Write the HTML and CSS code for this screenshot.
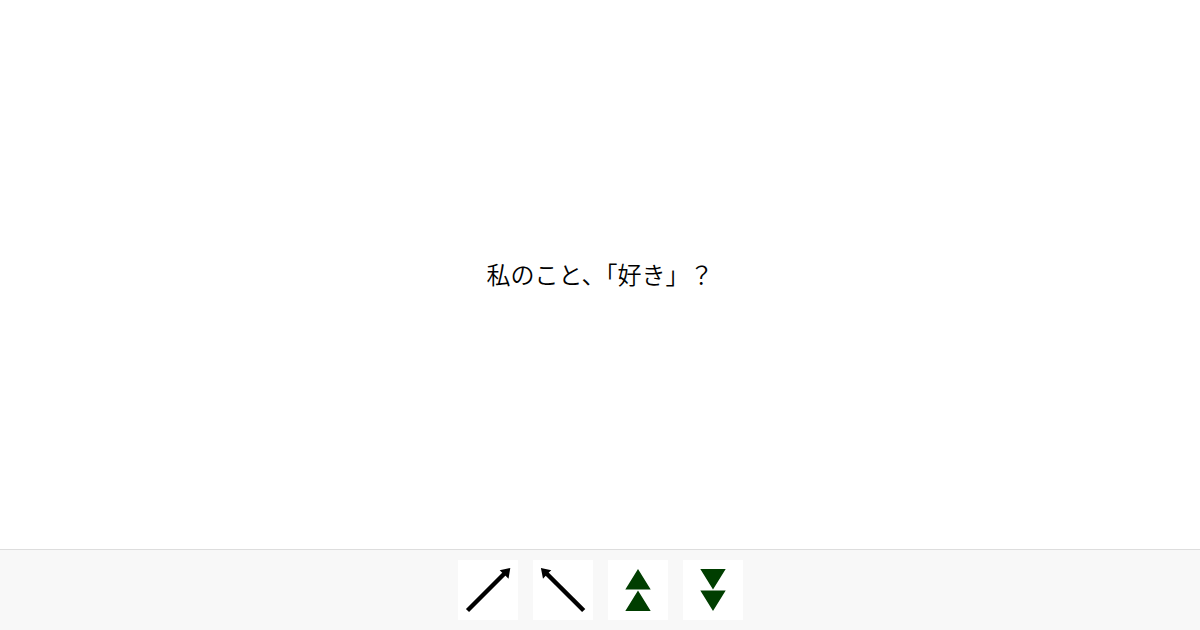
FILE: index.html
```
<!DOCTYPE html>
<html lang="ja">
<head>
<meta charset="utf-8">
<title>カード</title>
<link rel="stylesheet" href="styles.css">
</head>
<body>
<main class="stage"><p class="phrase">私のこと、「好き」？</p></main>
<footer class="toolbar">
<button class="tool" aria-label="右上"><svg viewBox="0 0 60 60"><path d="M9.500 50.500L47.500 12.500" stroke="#000" stroke-width="4.500"/><path d="M52.300 8L50.500 18.700L47.800 16L44 12.500L41.700 10.300Z"/></svg></button>
<button class="tool" aria-label="左上"><svg viewBox="0 0 60 60"><path d="M50.700 50.500L12.500 12.500" stroke="#000" stroke-width="4.500"/><path d="M7.900 8L18.300 10.300L15.800 12.500L12.500 16L10 18.700Z"/></svg></button>
<button class="tool" aria-label="上へ"><svg viewBox="0 0 60 60"><path class="green" d="M30 9L42.700 29.500H17.300ZM30 30.500L42.700 51H17.300Z"/></svg></button>
<button class="tool" aria-label="下へ"><svg viewBox="0 0 60 60"><path class="green" d="M17.300 9H42.700L30 29.500ZM17.300 30.500H42.700L30 51Z"/></svg></button>
</footer>
</body>
</html>
```
FILE: styles.css
```
body { margin: 0; height: 100vh; display: flex; flex-direction: column; background: #fff; color: #000; font-family: "Noto Sans CJK JP", sans-serif; }
.stage { flex: 1; display: flex; align-items: center; justify-content: center; }
.phrase { margin: 0; padding-bottom: 2px; font-size: 24px; font-weight: 350; line-height: 36px; font-feature-settings: "chws"; }
.toolbar { box-sizing: border-box; height: 81px; padding-top: 10px; display: flex; justify-content: center; gap: 15px; background: #f8f8f8; border-top: 1px solid #ddd; }
.tool { width: 60px; height: 60px; padding: 0; border: 0; background: #fff; }
.tool svg { display: block; width: 60px; height: 60px; }
.green { fill: #003e00; }
```
